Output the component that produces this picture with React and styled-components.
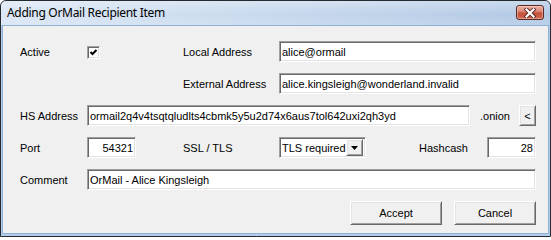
import React from "react";
import styled, { createGlobalStyle, css } from "styled-components";

const Global = createGlobalStyle`
  html, body { margin: 0; padding: 0; background: #ffffff; overflow: hidden; }
  * { box-sizing: border-box; }
`;

const sunken = css`
  border: 1px solid;
  border-color: #a0a0a0 #ffffff #ffffff #a0a0a0;
  box-shadow: inset 1px 1px 0 #696969, inset -1px -1px 0 #e3e3e3;
`;

const raised = css`
  border: 1px solid;
  border-color: #ffffff #696969 #696969 #ffffff;
  box-shadow: inset 1px 1px 0 #e3e3e3, inset -1px -1px 0 #a0a0a0;
  background: #f0f0f0;
`;

const uiFont = css`
  font-family: "Liberation Sans", Arial, sans-serif;
  font-size: 11px;
  color: #000;
`;

const Window = styled.div`
  width: 551px;
  height: 237px;
  border: 1px solid #252a31;
  border-radius: 6px 6px 0 0;
  background: #b3cde9;
  padding-bottom: 2px;
  display: flex;
  flex-direction: column;
  overflow: hidden;
`;

const TitleBar = styled.div`
  height: 24px;
  flex-shrink: 0;
  display: flex;
  align-items: flex-start;
  justify-content: space-between;
  padding: 0 6px 0 6px;
  border-radius: 5px 5px 0 0;
  background:
    linear-gradient(to bottom, rgba(255, 255, 255, 0.3), rgba(255, 255, 255, 0) 55%, rgba(255, 255, 255, 0.12)),
    linear-gradient(to right, #dbe6f4 0%, #c9daee 45%, #b2c9e5 100%);
`;

const Title = styled.span`
  font-family: "Noto Sans", "Open Sans", sans-serif;
  font-size: 12px;
  color: #000;
  line-height: 24px;
  letter-spacing: -0.3px;
`;

const CloseButton = styled.div`
  margin-top: 4px;
  width: 28px;
  height: 15px;
  border: 1px solid #5c2a24;
  border-radius: 3px;
  background: linear-gradient(
    to bottom,
    #eab3a6 0%,
    #dc8a78 40%,
    #c4503b 55%,
    #cf6a52 100%
  );
  box-shadow: inset 0 0 0 1px rgba(255, 220, 210, 0.45);
  display: flex;
  align-items: center;
  justify-content: center;
`;

const Client = styled.div`
  flex: 1;
  margin: 0 1px;
  border: 1px solid #8eb1d8;
  background: #f0f0f0;
  padding: 15px 12px 0 17px;
  display: flex;
  flex-direction: column;
  gap: 11px;
`;

const Row = styled.div`
  display: flex;
  align-items: center;
  height: ${(p) => p.$h || 21}px;
  justify-content: ${(p) => (p.$end ? "flex-end" : "flex-start")};
  gap: ${(p) => p.$gap || 0}px;
`;

const Label = styled.span`
  ${uiFont};
  flex-shrink: 0;
  width: ${(p) => p.$w}px;
  margin-left: ${(p) => p.$ml || 0}px;
  white-space: nowrap;
`;

const Field = styled.input`
  ${uiFont};
  ${sunken};
  height: 21px;
  background: #ffffff;
  padding: 0 2px;
  outline: none;
  margin: 0;
  text-align: ${(p) => p.$align || "left"};
  width: ${(p) => (p.$w ? `${p.$w}px` : "auto")};
  flex: ${(p) => (p.$w ? "0 0 auto" : "1 1 0")};
  min-width: 0;
`;

const CheckCell = styled.div`
  width: ${(p) => p.$w}px;
  flex-shrink: 0;
  display: flex;
  align-items: center;
  padding-top: 2px;
`;

const CheckBox = styled.span`
  ${sunken};
  width: 13px;
  height: 13px;
  background: #ffffff;
  display: flex;
  align-items: center;
  justify-content: center;
`;

const Select = styled.div`
  ${sunken};
  ${uiFont};
  width: ${(p) => p.$w}px;
  flex-shrink: 0;
  height: 21px;
  background: #ffffff;
  display: flex;
  align-items: center;
  justify-content: space-between;
  padding: 2px 2px 2px 2px;
  white-space: nowrap;
`;

const SelectText = styled.span`
  white-space: nowrap;
  flex-shrink: 0;
`;

const DropButton = styled.span`
  ${raised};
  width: 17px;
  height: 17px;
  flex-shrink: 0;
  display: flex;
  align-items: center;
  justify-content: center;
`;

const Button = styled.button`
  ${raised};
  ${uiFont};
  width: ${(p) => p.$w}px;
  height: ${(p) => p.$h}px;
  flex-shrink: 0;
  padding: 0;
  margin: 0;
  display: flex;
  align-items: center;
  justify-content: center;
`;

export default function App() {
  return (
    <>
      <Global />
      <Window>
        <TitleBar>
          <Title>Adding OrMail Recipient Item</Title>
          <CloseButton>
            <svg width="12" height="10" viewBox="0 0 12 10">
              <path d="M2.5 1.5 L9.5 8.5 M9.5 1.5 L2.5 8.5" stroke="#5a2520" strokeWidth="4" strokeLinecap="square" fill="none" />
              <path d="M2.5 1.5 L9.5 8.5 M9.5 1.5 L2.5 8.5" stroke="#ffffff" strokeWidth="2.2" strokeLinecap="square" fill="none" />
            </svg>
          </CloseButton>
        </TitleBar>
        <Client>
          <Row>
            <Label $w={67}>Active</Label>
            <CheckCell $w={96}>
              <CheckBox>
                <svg width="9" height="9" viewBox="0 0 9 9">
                  <polyline points="1.5,4 3.5,6 7.5,2" fill="none" stroke="#000" strokeWidth="2" />
                </svg>
              </CheckBox>
            </CheckCell>
            <Label $w={96}>Local Address</Label>
            <Field readOnly defaultValue="alice@ormail" />
          </Row>
          <Row>
            <Label $w={96} $ml={163}>External Address</Label>
            <Field readOnly defaultValue="alice.kingsleigh@wonderland.invalid" />
          </Row>
          <Row>
            <Label $w={67}>HS Address</Label>
            <Field $w={383} readOnly defaultValue="ormail2q4v4tsqtqludlts4cbmk5y5u2d74x6aus7tol642uxi2qh3yd" />
            <Label $w={39} $ml={10}>.onion</Label>
            <Button $w={17} $h={21}>&lt;</Button>
          </Row>
          <Row>
            <Label $w={67}>Port</Label>
            <Field $w={49} $align="right" readOnly defaultValue="54321" />
            <Label $w={96} $ml={47}>SSL / TLS</Label>
            <Select $w={87}>
              <SelectText>TLS required</SelectText>
              <DropButton>
                <svg width="7" height="4" viewBox="0 0 7 4">
                  <polygon points="0,0 7,0 3.5,4" fill="#000" />
                </svg>
              </DropButton>
            </Select>
            <Label $w={68} $ml={53}>Hashcash</Label>
            <Field $w={49} $align="right" readOnly defaultValue="28" />
          </Row>
          <Row>
            <Label $w={67}>Comment</Label>
            <Field readOnly defaultValue="OrMail - Alice Kingsleigh" />
          </Row>
          <Row $end $gap={12} $h={24}>
            <Button $w={92} $h={24}>Accept</Button>
            <Button $w={82} $h={24}>Cancel</Button>
          </Row>
        </Client>
      </Window>
    </>
  );
}
